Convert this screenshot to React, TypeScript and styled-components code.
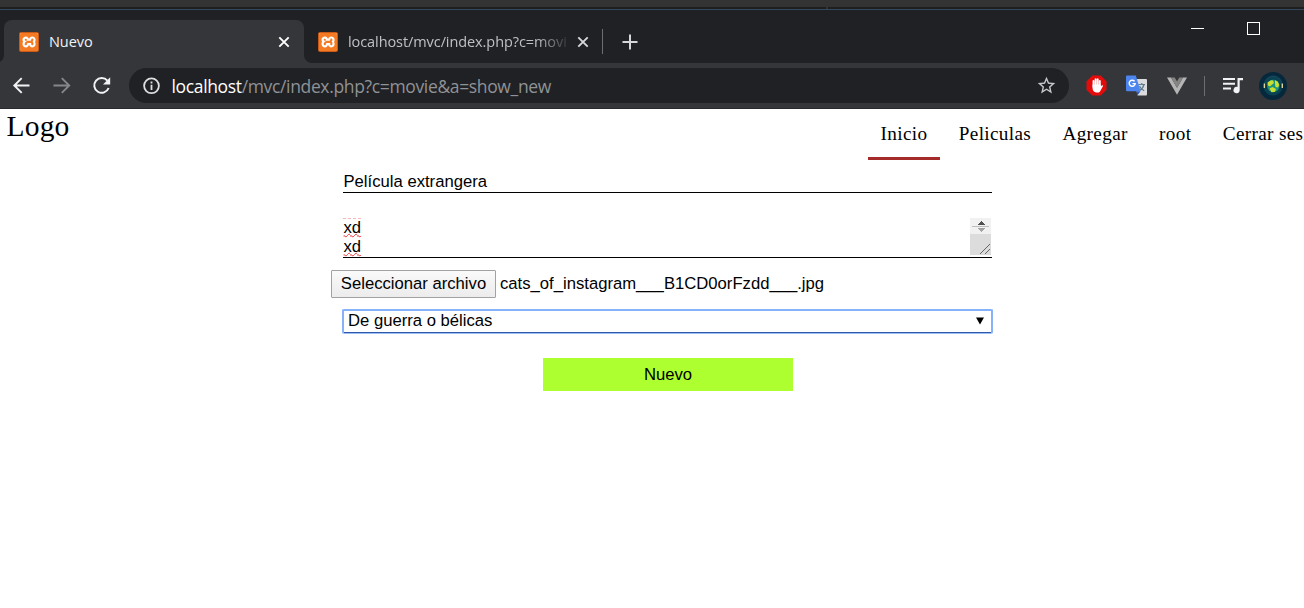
import React from 'react';
import styled, { createGlobalStyle } from 'styled-components';
import { SiXampp } from 'react-icons/si';

const Global = createGlobalStyle`
  * { box-sizing: border-box; }
  html, body { margin: 0; padding: 0; background: #fff; overflow: hidden; }
  svg { display: block; flex: none; }
`;

const Window = styled.div`
  width: 1304px;
  height: 608px;
  overflow: hidden;
  background: #fff;
  font-family: 'Liberation Sans', Arial, sans-serif;
  color: #000;
`;

const Backdrop = styled.div`
  height: 10px;
  background: #333;
  border-bottom: 1px solid #34495e;
  display: flex;
  align-items: flex-end;
  gap: 2px;
`;
const BackdropEdge = styled.div<{ $w?: number }>`
  height: 2px;
  background: #1e1e1e;
  ${p => (p.$w ? `width: ${p.$w}px;` : 'flex: 1;')}
`;

const TabStrip = styled.div`
  height: 53px;
  background: #202124;
  display: flex;
  padding: 10px 0 0 4px;
  font-family: 'Open Sans', 'Segoe UI', sans-serif;
`;
const Tab = styled.div<{ $active?: boolean }>`
  position: relative;
  width: ${p => (p.$active ? 300 : 298)}px;
  height: 43px;
  display: flex;
  align-items: center;
  padding: 0 ${p => (p.$active ? 13 : 12)}px 0 ${p => (p.$active ? 15 : 14)}px;
  border-radius: 8px 8px 0 0;
  background: ${p => (p.$active ? '#35363a' : 'transparent')};
`;
const Flare = styled.span<{ $side: 'left' | 'right' }>`
  position: absolute;
  bottom: 0;
  ${p => p.$side}: -8px;
  width: 8px;
  height: 8px;
  background: radial-gradient(circle at ${p => (p.$side === 'left' ? '0 0' : '100% 0')}, transparent 7.5px, #35363a 8.5px);
`;
const TabTitle = styled.div<{ $active?: boolean }>`
  flex: 1;
  margin: 0 10px;
  overflow: hidden;
  white-space: nowrap;
  font-size: 14.5px;
  line-height: 20px;
  letter-spacing: ${p => (p.$active ? '-0.05px' : '-0.08px')};
  color: ${p => (p.$active ? '#f1f3f4' : '#bdc1c6')};
  ${p => !p.$active && 'margin-right: 9px; mask-image: linear-gradient(to right, #000 188px, transparent 224px);'}
`;
const Favicon = styled.div`
  flex: none;
  width: 20px;
  height: 20px;
  padding: 2px;
  border: 1px solid #c95a17;
  border-radius: 1.5px;
  background: linear-gradient(#f6a063 0, #f6a063 3px, #f47b24 3px);
  color: #f47b24;
`;
const FaviconMark = styled.div`
  width: 20px;
  height: 20px;
  margin: -3px;
  padding: 1px;
  background: linear-gradient(#fff, #fff) center / 15px 13px no-repeat;
`;
const Divider = styled.div<{ $h: number }>`
  width: 1px;
  height: ${p => p.$h}px;
  background: #6b6e73;
`;
const NewTab = styled.div`
  margin: 0 0 0 19px;
  height: 43px;
  display: flex;
  align-items: center;
`;
const TabDivider = styled.div`
  height: 43px;
  display: flex;
  align-items: center;
`;
const WindowControls = styled.div`
  margin-left: auto;
  width: 113px;
  padding-top: 2px;
  display: flex;
  gap: 43px;
`;

const Toolbar = styled.div`
  height: 46px;
  background: #35363a;
  border-bottom: 1px solid #292a2d;
  display: flex;
  align-items: center;
  padding: 0 0 0 12px;
`;
const NavButtons = styled.div`
  display: flex;
  gap: 20px;
  width: 117px;
`;
const Omnibox = styled.div`
  width: 940px;
  height: 35px;
  border-radius: 18px;
  background: #202124;
  display: flex;
  align-items: center;
  padding: 0 12px 0 13px;
  font-family: 'Open Sans', 'Segoe UI', sans-serif;
  font-size: 17.5px;
  line-height: 24px;
`;
const Url = styled.div`
  flex: 1;
  margin-left: 9.5px;
  color: #8f9296;
  white-space: nowrap;
  letter-spacing: -0.35px;
`;
const Host = styled.span`
  color: #fff;
`;
const Extensions = styled.div`
  display: flex;
  align-items: center;
  margin-left: 17px;
`;
const Slot = styled.div<{ $ml: number }>`
  margin-left: ${p => p.$ml}px;
`;

const SiteHeader = styled.header`
  height: 51px;
  display: flex;
  justify-content: space-between;
  font-family: 'Liberation Serif', 'Times New Roman', serif;
`;
const Logo = styled.div`
  padding-left: 6.5px;
  font-size: 29.5px;
  letter-spacing: 0.2px;
  line-height: 35px;
`;
const Menu = styled.nav`
  display: flex;
  width: 436px;
  gap: 6.4px;
  overflow: hidden;
`;
const MenuItem = styled.a<{ $active?: boolean }>`
  flex: none;
  height: 51px;
  padding: 13px 12.4px 0 12.6px;
  font-size: 19.2px;
  letter-spacing: 0.34px;
  line-height: 24px;
  white-space: nowrap;
  border-bottom: 3px solid ${p => (p.$active ? 'brown' : 'transparent')};
`;

const Form = styled.form`
  width: 649px;
  margin: 10px 0 0 343px;
  font-size: 16.667px;
  display: flex;
  flex-direction: column;
`;
const Field = styled.div`
  height: 23px;
  line-height: 23px;
  padding-left: 0.5px;
  border-bottom: 1px solid #000;
`;
const Area = styled.div`
  height: 40px;
  margin-top: 25px;
  border-bottom: 1px solid #000;
  display: flex;
  justify-content: space-between;
  padding-right: 1px;
`;
const AreaText = styled.div`
  line-height: 19px;
  padding-left: 0.5px;
  border-top: 1px dashed #f8b8b8;
  height: 39px;
`;
const Misspelled = styled.div`
  height: 19px;
  line-height: 17px;
  text-decoration: underline wavy #e33 1px;
  text-decoration-skip-ink: none;
  text-underline-offset: 0;
`;
const FileRow = styled.div`
  display: flex;
  align-items: center;
  gap: 4px;
  margin: 12px 0 0 -12px;
  height: 28px;
  white-space: nowrap;
`;
const FileButton = styled.span`
  width: 165px;
  height: 28px;
  line-height: 26px;
  text-align: center;
  border: 1px solid #a2a2a2;
  border-radius: 1px;
  background: linear-gradient(#fafafa, #ececec);
`;
const Select = styled.div`
  margin: 11px -1px 0;
  width: 651px;
  height: 25px;
  border: 2px solid #86b2fa;
  border-bottom: 1px solid #9dbff5;
  border-radius: 2px;
  box-shadow: inset 0 -1px 0 #2c5aa8;
  display: flex;
  justify-content: space-between;
  align-items: center;
  padding: 0 7px 2px 4px;
`;
const Submit = styled.div`
  align-self: center;
  margin: 24px 0 0 1px;
  width: 250px;
  height: 33px;
  line-height: 33px;
  text-align: center;
  background: greenyellow;
`;

const XamppIcon = () => (
  <Favicon>
    <FaviconMark>
      <SiXampp size={18} />
    </FaviconMark>
  </Favicon>
);

const CloseIcon = ({ color }: { color: string }) => (
  <svg width="14" height="14" viewBox="0 0 14 14" stroke={color} strokeWidth="1.9">
    <path d="M2.300 2.300l9.400 9.400M11.700 2.300L2.300 11.700" />
  </svg>
);

const ArrowIcon = ({ color, flip }: { color: string; flip?: boolean }) => (
  <svg width="20" height="20" viewBox="0 0 20 20" fill="none" stroke={color} strokeWidth="1.900">
    <path d={flip ? 'M1.500 9.500h15M9.800 2.100l7.400 7.400-7.400 7.400' : 'M17.500 9.500H2.500M9.700 2.100L2.300 9.500l7.400 7.400'} />
  </svg>
);

const ReloadIcon = () => (
  <svg width="20" height="20" viewBox="0 0 20 20">
    <path d="M15.400 4.700A7.400 7.400 0 1 0 16.600 12" fill="none" stroke="#f1f3f4" strokeWidth="2" />
    <path d="M18.200 1.300v7.200h-7.200z" fill="#f1f3f4" />
  </svg>
);

const InfoIcon = () => (
  <svg width="20" height="20" viewBox="0 0 20 20">
    <circle cx="9.500" cy="9.800" r="7.400" fill="none" stroke="#dcdee0" strokeWidth="1.800" />
    <path d="M8.600 5.600h1.800v1.900H8.600zM8.600 8.800h1.800v5.200H8.600z" fill="#dcdee0" />
  </svg>
);

const StarIcon = () => (
  <svg width="21" height="21" viewBox="0 0 24 24" fill="#c6c8ca">
    <path d="M22 9.240l-7.190-.620L12 2 9.190 8.630 2 9.240l5.460 4.730L5.820 21 12 17.270 18.180 21l-1.630-7.030L22 9.240zM12 15.400l-3.760 2.270 1-4.280-3.320-2.880 4.380-.380L12 6.100l1.710 4.040 4.380.380-3.320 2.880 1 4.280L12 15.400z" />
  </svg>
);

const BlockIcon = () => (
  <svg width="21" height="21" viewBox="0 0 21 21">
    <path d="M6.300.5h8.400l5.800 6v8.200l-5.800 5.800H6.300L.5 14.700V6.500z" fill="#e50b0b" />
    <g stroke="#fff" strokeWidth="1.900" strokeLinecap="round" fill="none">
      <path d="M7.500 6v6M9.600 4.200v7M11.700 4.200v7M13.800 6v6" />
    </g>
    <path d="M6.600 9.500h8.100v2.300l1-1.300c.7-.6 1.600-.1 1.200.8l-2.600 4.600c-.6 1-1.400 1.500-2.500 1.500h-1.600c-2 0-3.600-1.500-3.600-3.800z" fill="#fff" />
  </svg>
);

const TranslateIcon = () => (
  <svg width="21" height="21" viewBox="0 0 21 21">
    <path d="M8 4h12a1 1 0 0 1 1 1v14.500a1 1 0 0 1-1 1h-8.500z" fill="#dcdcdc" />
    <path d="M12.500 9.500h6.500M15.800 8v1.500M18 9.500c-.7 3-2.700 5-4.600 6M13.500 11c.8 2 2.600 3.800 4.700 4.700" stroke="#607d8b" strokeWidth="1.200" fill="none" />
    <path d="M10.500 16.300h4l-3.200 4.200z" fill="#3059c0" />
    <path d="M1 .5h8.800l4.900 15.800H1a1 1 0 0 1-1-1V1.500a1 1 0 0 1 1-1z" fill="#4c85ee" />
    <path d="M8.600 6.400a3 3 0 1 0 .6 2.200H6.500" fill="none" stroke="#fff" strokeWidth="1.400" />
  </svg>
);

const VueIcon = () => (
  <svg width="20" height="18" viewBox="0 0 20 18">
    <path d="M0 .5h4l6 10.200L16 .5h4L10 17.700z" fill="#b4b4b4" />
    <path d="M4 .5h3.700L10 4.400 12.300.5H16l-6 10.200z" fill="#858585" />
  </svg>
);

const QueueIcon = () => (
  <svg width="20" height="17" viewBox="0 0 20 17" fill="#f1f3f4">
    <path d="M0 1h12v2H0zM0 5.700h12v2H0zM0 10.500h8v2H0zM14.500 1H20v2.200h-3.300v9.900a3.100 3.100 0 1 1-2.200-3z" />
  </svg>
);

const Avatar = () => (
  <svg width="28" height="28" viewBox="0 0 28 28">
    <circle cx="14" cy="14" r="14" fill="#06283d" />
    <circle cx="14" cy="14" r="9.500" fill="#0a4453" />
    <path d="M5.500 14v-1a8.700 8.700 0 0 1 17.500 0v1" fill="none" stroke="#16465a" strokeWidth="1.300" />
    <circle cx="14.300" cy="14" r="6.200" fill="#1b927b" />
    <path d="M8.500 10.500l3.500-2.300 2 .300 1 2.500-2.500 2-1.500 1.500-2-1zM16 8.200l2.700 1.300 1.500 3.500-1.200 2.500-2.500-.500-.500-3zM10.500 16.500l3-1.500 3.500 2-1 2.800-3.500.500z" fill="#c9df32" />
    <path d="M5.400 11.500v4.500M23.300 11.500v4.500" stroke="#d9d79c" strokeWidth="1.400" />
    <path d="M7.200 12.500v4M21.500 12.500v4" stroke="#0a2f40" strokeWidth="1.200" />
  </svg>
);

const Scrollbar = () => (
  <svg width="21" height="37" viewBox="0 0 21 37" shapeRendering="crispEdges">
    <rect width="21" height="16" fill="#f1f1f1" />
    <rect y="16" width="21" height="21" fill="#dcdcdc" />
    <path d="M7 7h8L11 3z" fill="#505050" />
    <rect x="2" y="8" width="17" height="1" fill="#bdbdbd" />
    <path d="M7 10h8l-4 4z" fill="#a3a3a3" />
    <path d="M10 36L20 26M15 36l5-5" stroke="#666" fill="none" />
  </svg>
);

export default function App() {
  return (
    <Window>
      <Global />
      <Backdrop>
        <BackdropEdge $w={826} />
        <BackdropEdge />
      </Backdrop>
      <TabStrip>
        <Tab $active>
          <Flare $side="left" />
          <Flare $side="right" />
          <XamppIcon />
          <TabTitle $active>Nuevo</TabTitle>
          <CloseIcon color="#fff" />
        </Tab>
        <Tab>
          <XamppIcon />
          <TabTitle>localhost/mvc/index.php?c=movi</TabTitle>
          <CloseIcon color="#d5d7da" />
        </Tab>
        <TabDivider><Divider $h={25} /></TabDivider>
        <NewTab>
          <svg width="16" height="16" viewBox="0 0 16 16" stroke="#d5d7da" strokeWidth="2">
            <path d="M8 .5v15M.5 8h15" />
          </svg>
        </NewTab>
        <WindowControls>
          <svg width="13" height="13" viewBox="0 0 13 13"><path d="M0 6.500h13" stroke="#fff" /></svg>
          <svg width="13" height="13" viewBox="0 0 13 13"><rect x=".5" y=".5" width="12" height="12" fill="none" stroke="#fff" /></svg>
        </WindowControls>
      </TabStrip>
      <Toolbar>
        <NavButtons>
          <ArrowIcon color="#f1f3f4" />
          <ArrowIcon color="#85878a" flip />
          <ReloadIcon />
        </NavButtons>
        <Omnibox>
          <InfoIcon />
          <Url><Host>localhost</Host>/mvc/index.php?c=movie&amp;a=show_new</Url>
          <StarIcon />
        </Omnibox>
        <Extensions>
          <BlockIcon />
          <Slot $ml={19}><TranslateIcon /></Slot>
          <Slot $ml={20}><VueIcon /></Slot>
          <Slot $ml={17}><Divider $h={20} /></Slot>
          <Slot $ml={18}><QueueIcon /></Slot>
          <Slot $ml={16}><Avatar /></Slot>
        </Extensions>
      </Toolbar>
      <SiteHeader>
        <Logo>Logo</Logo>
        <Menu>
          <MenuItem $active>Inicio</MenuItem>
          <MenuItem>Peliculas</MenuItem>
          <MenuItem>Agregar</MenuItem>
          <MenuItem>root</MenuItem>
          <MenuItem>Cerrar sesión</MenuItem>
        </Menu>
      </SiteHeader>
      <Form>
        <Field>Película extrangera</Field>
        <Area>
          <AreaText>
            <Misspelled>xd</Misspelled>
            <Misspelled>xd</Misspelled>
          </AreaText>
          <Scrollbar />
        </Area>
        <FileRow>
          <FileButton>Seleccionar archivo</FileButton>
          <span>cats_of_instagram___B1CD0orFzdd___.jpg</span>
        </FileRow>
        <Select>
          <span>De guerra o bélicas</span>
          <svg width="8" height="8" viewBox="0 0 8 8"><path d="M0 .5h8L4 7.500z" /></svg>
        </Select>
        <Submit>Nuevo</Submit>
      </Form>
    </Window>
  );
}
